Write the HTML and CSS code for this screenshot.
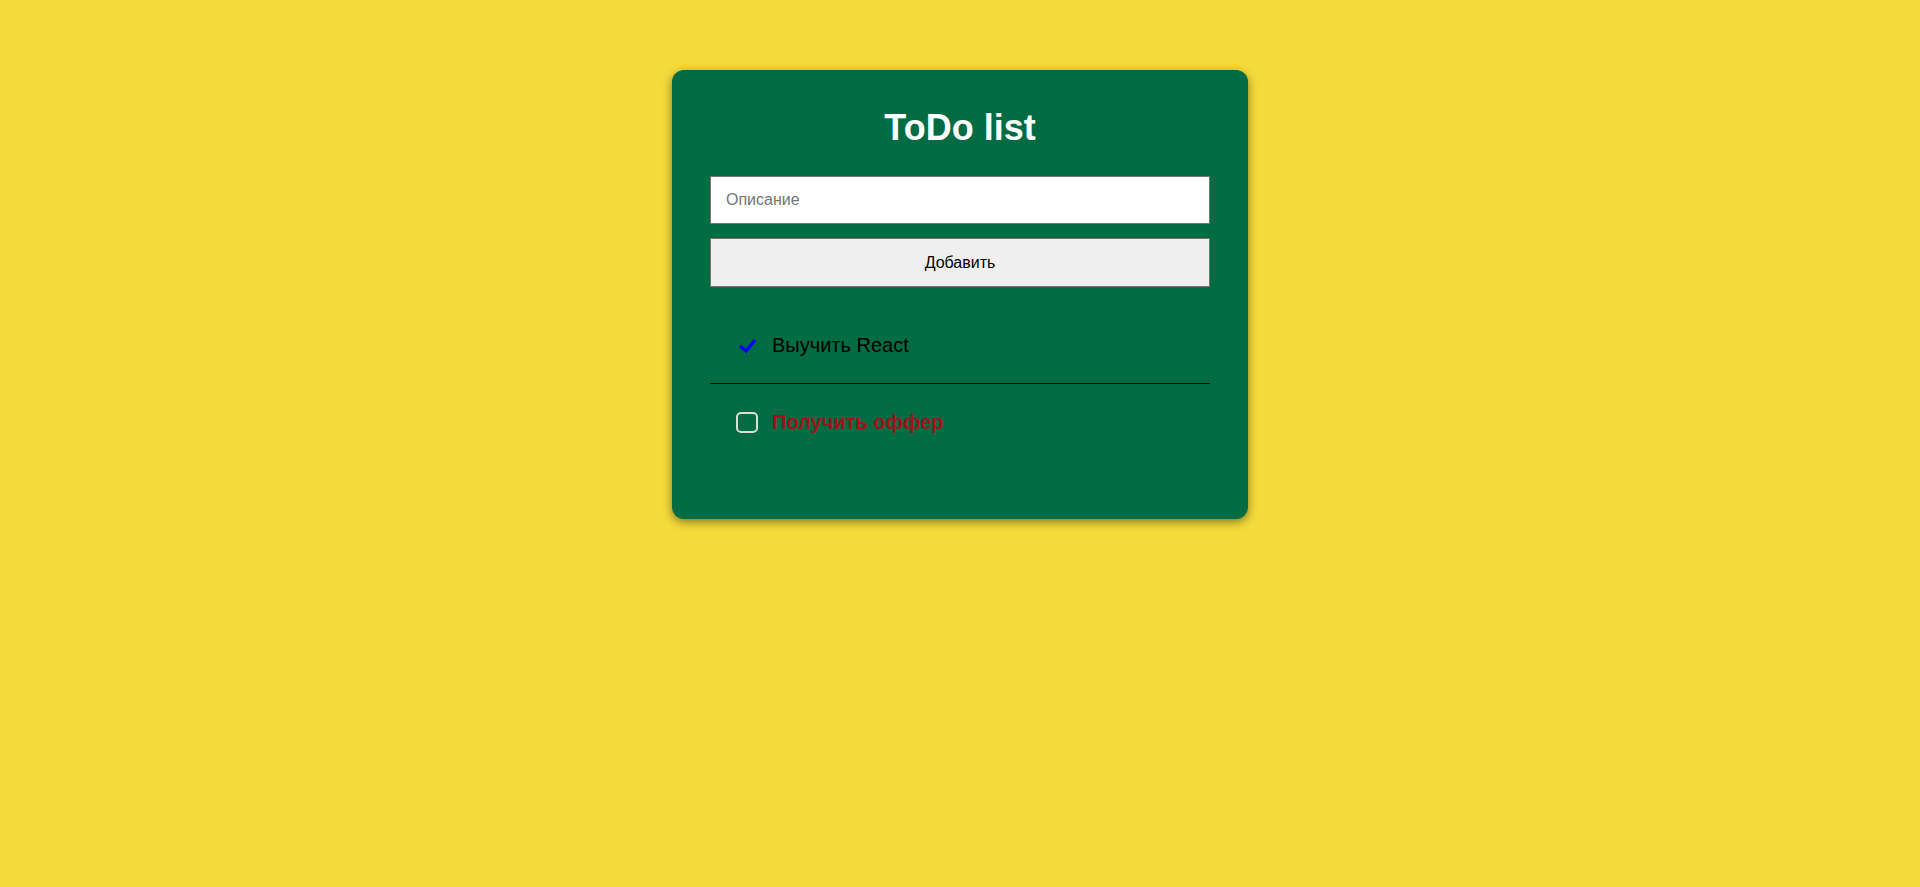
FILE: index.html
```html
<!DOCTYPE html>
<html lang="ru">
<head>
<meta charset="utf-8">
<title>ToDo list</title>
<link rel="stylesheet" href="styles.css">
</head>
<body>
<main class="page">
  <section class="card">
    <h1 class="title">ToDo list</h1>
    <form class="form">
      <input class="field" type="text" placeholder="Описание">
      <button class="add" type="button">Добавить</button>
    </form>
    <ul class="list">
      <li class="item">
        <span class="mark">
          <svg width="20" height="16" viewBox="0 0 20 16"><polyline points="3,9 9,14 18,3" fill="none" stroke="#0000ff" stroke-width="3.2"/></svg>
        </span>
        <span class="text done">Выучить React</span>
      </li>
      <li class="item">
        <span class="box"></span>
        <span class="text todo">Получить оффер</span>
      </li>
    </ul>
  </section>
</main>
</body>
</html>
```
FILE: styles.css
```css
html, body {
  margin: 0;
  padding: 0;
}
body {
  background: #f4db3a;
  font-family: "Liberation Sans", Arial, sans-serif;
  min-height: 887px;
}
.page {
  display: flex;
  justify-content: center;
  padding-top: 70px;
}
.card {
  width: 576px;
  box-sizing: border-box;
  padding: 0 38px 59px;
  background: #016b43;
  border-radius: 12px;
  box-shadow: 0 3px 10px rgba(0, 0, 0, 0.45);
}
.title {
  margin: 0;
  padding: 37px 0 27px;
  font-size: 36px;
  line-height: 42px;
  font-weight: bold;
  color: #ffffff;
  text-align: center;
}
.form {
  display: flex;
  flex-direction: column;
  gap: 14px;
}
.field {
  box-sizing: border-box;
  height: 48px;
  margin: 0;
  padding: 0 15px;
  border: 1px solid #767676;
  background: #fff;
  font-family: "Liberation Sans", Arial, sans-serif;
  font-size: 16px;
  color: #000;
}
.field::placeholder {
  color: #757575;
}
.add {
  box-sizing: border-box;
  height: 49px;
  margin: 0;
  border: 1px solid #767676;
  background: #efefef;
  font-family: "Liberation Sans", Arial, sans-serif;
  font-size: 16px;
  color: #000;
}
.list {
  list-style: none;
  margin: 20px 0 0;
  padding: 0;
}
.item {
  display: flex;
  align-items: center;
  gap: 14px;
  height: 76px;
  padding-left: 26px;
  box-sizing: border-box;
}
.item + .item {
  border-top: 1px solid #000;
  height: 77px;
}
.mark {
  width: 22px;
  display: flex;
  justify-content: center;
}
.box {
  width: 18px;
  height: 17px;
  border: 2px solid #dcdcdc;
  border-radius: 5px;
}
.text {
  font-size: 20px;
  line-height: 24px;
}
.done {
  color: #000;
}
.todo {
  color: #a3101a;
  font-weight: bold;
}
```
